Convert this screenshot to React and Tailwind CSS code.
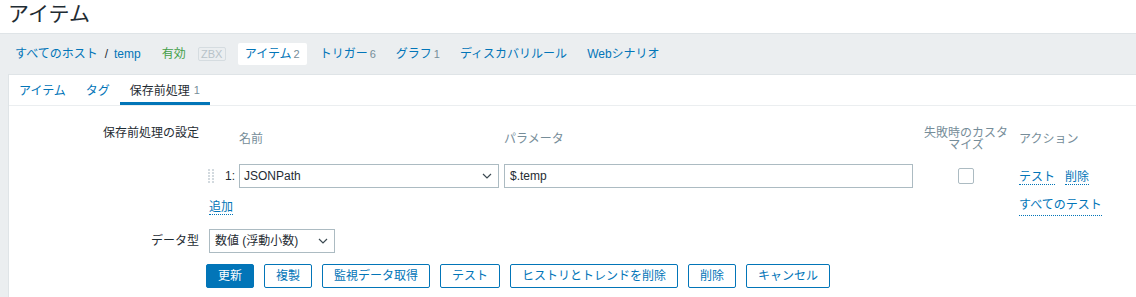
import React from 'react'

const FONT = { fontFamily: '"Liberation Sans", "Noto Sans CJK JP", Arial, sans-serif' }

function Chevron() {
  return (
    <svg width="10" height="6" viewBox="0 0 10 6" className="shrink-0">
      <path d="M1 1l4 4 4-4" fill="none" stroke="#3c4a52" strokeWidth="1.2" />
    </svg>
  )
}

function DragHandle() {
  const dots = []
  for (let r = 0; r < 5; r++) {
    dots.push(<rect key={'a' + r} x="0" y={r * 3} width="2" height="2" fill="#d3dadf" />)
    dots.push(<rect key={'b' + r} x="4" y={r * 3} width="2" height="2" fill="#d3dadf" />)
  }
  return (
    <svg width="6" height="14" viewBox="0 0 6 14" className="shrink-0">
      {dots}
    </svg>
  )
}

function Link({ children, className = '' }) {
  return (
    <span className={`text-[#0275b8] leading-[14px] border-b border-dotted border-[#0275b8] ${className}`}>
      {children}
    </span>
  )
}

function Btn({ children, primary }) {
  return (
    <button
      className={`h-[24px] px-[11px] rounded-[2px] border border-[#0275b8] text-[12px] leading-[22px] ${
        primary ? 'bg-[#0275b8] text-white' : 'bg-white text-[#0275b8]'
      }`}
    >
      {children}
    </button>
  )
}

export default function App() {
  const navItems = [
    { label: 'トリガー', count: '6' },
    { label: 'グラフ', count: '1' },
    { label: 'ディスカバリルール' },
    { label: 'Webシナリオ' },
  ]

  return (
    <div style={FONT} className="w-[1136px] h-[297px] overflow-hidden bg-[#ebeef0] text-[12px] text-[#1f2c33]">
      {/* Title */}
      <div className="h-[34px] bg-white pl-[8px] border-b border-[#dfe4e7]">
        <h1 className="text-[21px] leading-[27px] font-normal">アイテム</h1>
      </div>

      {/* Breadcrumb nav */}
      <div className="h-[40px] flex items-center pl-[15px]">
        <span className="text-[#0275b8]">すべてのホスト</span>
        <span className="ml-[7px] text-[#1f2c33]">/</span>
        <span className="ml-[6px] text-[#0275b8]">temp</span>
        <span className="ml-[21px] text-[#429e47]">有効</span>
        <span className="ml-[12px] w-[28px] h-[14px] border border-[#d5dce0] rounded-[2px] text-[#b8c3c9] text-[11px] leading-[12px] flex items-center justify-center">
          ZBX
        </span>
        <span className="ml-[12px] h-[22px] px-[7px] bg-white rounded-[2px] flex items-center text-[#0275b8]">
          アイテム<span className="ml-[2px] text-[11px] text-[#768d99]">2</span>
        </span>
        {navItems.map((n) => (
          <span key={n.label} className="ml-[6px] h-[22px] px-[7px] flex items-center text-[#0275b8]">
            {n.label}
            {n.count && <span className="ml-[2px] text-[11px] text-[#768d99]">{n.count}</span>}
          </span>
        ))}
      </div>

      {/* Panel */}
      <div className="ml-[8px] h-[223px] bg-white border-l border-t border-[#dfe4e7]">
        {/* Tabs */}
        <div className="h-[31px] flex border-b border-[#ebeef0]">
          <div className="px-[10px] flex items-center pt-[2px] text-[#0275b8]">アイテム</div>
          <div className="px-[10px] flex items-center pt-[2px] text-[#0275b8]">タグ</div>
          <div className="px-[10px] flex items-center border-b-[3px] border-[#0275b8] pt-[4px]">
            保存前処理<span className="ml-[4px] text-[11px] text-[#768d99]">1</span>
          </div>
        </div>

        {/* Form */}
        <div className="pt-[18px]">
          <div className="flex">
            <div className="w-[190px] text-right pt-[2px] leading-[14px]">保存前処理の設定</div>
            <div className="ml-[10px]">
              {/* header */}
              <div className="h-[30px] flex items-center text-[#768d99]">
                <div className="w-[30px]" />
                <div className="w-[260px]">名前</div>
                <div className="w-[409px] ml-[5px]">パラメータ</div>
                <div className="w-[84px] ml-[11px] text-center leading-[12px]">失敗時のカスタマイズ</div>
                <div className="ml-[11px]">アクション</div>
              </div>
              {/* row */}
              <div className="mt-[10px] h-[24px] flex items-center">
                <div className="w-[30px] flex items-center">
                  <span className="-ml-[1px]"><DragHandle /></span>
                  <span className="ml-[11px]">1:</span>
                </div>
                <div className="w-[260px] h-[24px] border border-[#acbbc2] flex items-center justify-between pl-[4px] pr-[6px]">
                  <span>JSONPath</span>
                  <Chevron />
                </div>
                <div className="w-[409px] ml-[5px] h-[24px] border border-[#acbbc2] flex items-center pl-[5px]">
                  $.temp
                </div>
                <div className="w-[84px] ml-[11px] flex justify-center">
                  <div className="w-[16px] h-[16px] border border-[#acbbc2] rounded-[2px]" />
                </div>
                <div className="ml-[11px] flex items-center pt-[2px]">
                  <Link>テスト</Link>
                  <Link className="ml-[10px]">削除</Link>
                </div>
              </div>
              {/* add row */}
              <div className="mt-[10px] flex">
                <div className="w-[810px]">
                  <Link>追加</Link>
                </div>
                <Link>すべてのテスト</Link>
              </div>
            </div>
          </div>

          {/* data type */}
          <div className="mt-[13px] flex items-center">
            <div className="w-[190px] text-right">データ型</div>
            <div className="ml-[10px] w-[126px] h-[24px] border border-[#acbbc2] flex items-center justify-between pl-[5px] pr-[6px]">
              <span>数値 (浮動小数)</span>
              <Chevron />
            </div>
          </div>

          {/* buttons */}
          <div className="mt-[11px] ml-[197px] flex gap-[10px]">
            <Btn primary>更新</Btn>
            <Btn>複製</Btn>
            <Btn>監視データ取得</Btn>
            <Btn>テスト</Btn>
            <Btn>ヒストリとトレンドを削除</Btn>
            <Btn>削除</Btn>
            <Btn>キャンセル</Btn>
          </div>
        </div>
      </div>
    </div>
  )
}
